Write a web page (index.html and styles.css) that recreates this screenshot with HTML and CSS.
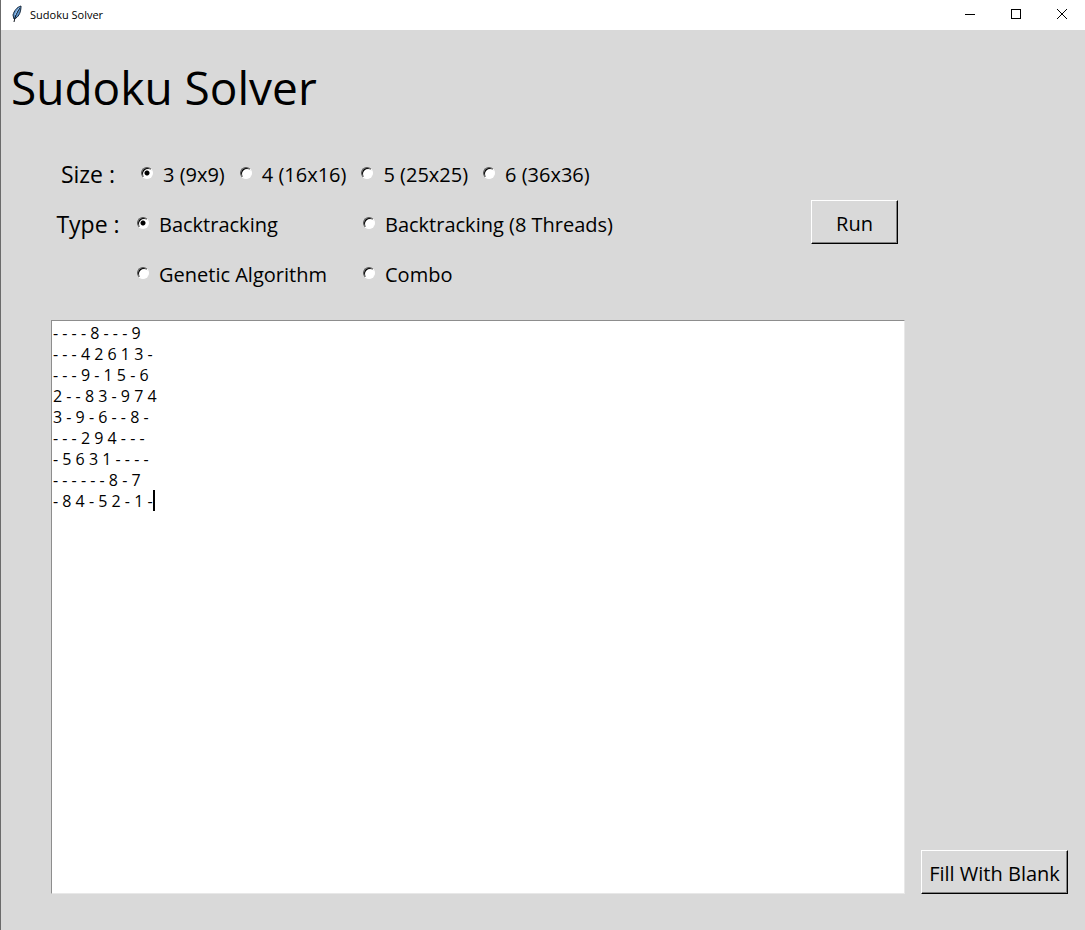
FILE: index.html
```html
<!DOCTYPE html>
<html lang="en">
<head>
<meta charset="utf-8">
<title>Sudoku Solver</title>
<link rel="stylesheet" href="styles.css">
</head>
<body>
<div class="window">
  <header class="titlebar">
    <svg class="feather" viewBox="0 0 12 18" aria-hidden="true">
      <path d="M10 1C6 2 3 6 2 10l1 4 2-1c3-2 5-6 5-12z" fill="#5b93cc" stroke="#17283a"/>
      <path d="M9 3C6 7 4 11 3 17" fill="none" stroke="#10151c"/>
      <path d="M8 3C6 5 5 8 4 10" fill="none" stroke="#a9cdf0"/>
    </svg>
    <span class="caption">Sudoku Solver</span>
    <button class="control" type="button" aria-label="Minimize"><svg viewBox="0 0 12 12" shape-rendering="crispEdges"><path d="M1 6.5h10"/></svg></button>
    <button class="control" type="button" aria-label="Maximize"><svg viewBox="0 0 12 12" shape-rendering="crispEdges"><path d="M1.5 1.5h9v9h-9z"/></svg></button>
    <button class="control" type="button" aria-label="Close"><svg viewBox="0 0 12 12"><path d="M1 1l10 10M11 1L1 11"/></svg></button>
  </header>
  <main class="content">
    <h1 class="heading">Sudoku Solver</h1>
    <form class="solver">
      <div class="settings">
        <div class="options">
          <span class="name" id="size-name">Size :</span>
          <div class="sizes" role="radiogroup" aria-labelledby="size-name">
            <label class="choice"><input type="radio" name="size" checked>3 (9x9)</label>
            <label class="choice"><input type="radio" name="size">4 (16x16)</label>
            <label class="choice"><input type="radio" name="size">5 (25x25)</label>
            <label class="choice"><input type="radio" name="size">6 (36x36)</label>
          </div>
          <span class="name" id="type-name">Type :</span>
          <div class="types" role="radiogroup" aria-labelledby="type-name">
            <label class="choice"><input type="radio" name="type" checked>Backtracking</label>
            <label class="choice"><input type="radio" name="type">Backtracking (8 Threads)</label>
            <label class="choice"><input type="radio" name="type">Genetic Algorithm</label>
            <label class="choice"><input type="radio" name="type">Combo</label>
          </div>
        </div>
        <button class="push run" type="button">Run</button>
      </div>
      <div class="editor">
        <textarea class="board" aria-label="Puzzle" spellcheck="false">- - - - 8 - - - 9
- - - 4 2 6 1 3 -
- - - 9 - 1 5 - 6
2 - - 8 3 - 9 7 4
3 - 9 - 6 - - 8 -
- - - 2 9 4 - - -
- 5 6 3 1 - - - -
- - - - - - 8 - 7
- 8 4 - 5 2 - 1 -</textarea>
        <span class="caret"></span>
      </div>
      <button class="push fill" type="button">Fill With Blank</button>
    </form>
  </main>
</div>
</body>
</html>
```
FILE: styles.css
```css
* { box-sizing: border-box; }

body {
  margin: 0;
  background: #d9d9d9;
  color: #000;
  font-family: "Open Sans", "Noto Sans", sans-serif;
  font-size: 20px;
}

button, input, textarea { font: inherit; color: inherit; }

.window {
  display: flex;
  flex-direction: column;
  min-height: 100vh;
  border-left: 1px solid #6b6b6b;
}

.titlebar {
  display: flex;
  align-items: center;
  height: 30px;
  padding: 0 0 2px 10px;
  background: #fff;
}

.feather { width: 12px; height: 18px; }

.caption {
  flex: 1;
  margin-left: 7px;
  font-size: 11px;
}

.control {
  display: flex;
  align-items: center;
  justify-content: center;
  width: 46px;
  height: 28px;
  padding: 0;
  border: 0;
  background: none;
}

.control svg {
  width: 12px;
  height: 12px;
  fill: none;
  stroke: #000;
}

.content {
  display: flex;
  flex: 1;
  flex-direction: column;
  padding: 19px 17px 36px 10px;
}

.heading {
  margin: 0;
  font-size: 46px;
  font-weight: 400;
  line-height: 76px;
}

.solver {
  display: grid;
  flex: 1;
  grid-template-columns: 1fr auto;
  grid-template-rows: auto 1fr;
  column-gap: 16px;
  padding: 25px 0 0 40px;
}

.settings {
  display: flex;
  align-items: center;
  justify-content: space-between;
  padding: 0 7px 20px 0;
}

.options {
  display: grid;
  grid-template-columns: 74px auto;
  column-gap: 12px;
  line-height: 50px;
}

.name {
  font-size: 23px;
  line-height: 48px;
  text-align: center;
}

.sizes { display: flex; gap: 15px; padding-left: 4px; }

.types { display: grid; grid-template-columns: 226px auto; }

.choice {
  display: flex;
  align-items: center;
  gap: 10px;
  white-space: nowrap;
}

.choice input {
  appearance: none;
  width: 12px;
  height: 12px;
  margin: 0 0 4px;
  border: 1px solid;
  border-color: #555 #fff #fff #555;
  border-radius: 50%;
  background: #fff;
  box-shadow: inset 1px 1px #000;
}

.choice input:checked {
  background: radial-gradient(circle, #000 2px, #fff 3px);
}

.push {
  height: 44px;
  padding: 2px 0 0;
  border: 1px solid;
  border-color: #fff #000 #000 #fff;
  border-radius: 0;
  background: #d9d9d9;
  box-shadow: inset -1px -1px #828282;
}

.run {
  width: 87px;
  margin-bottom: 6px;
}

.fill {
  align-self: end;
  width: 147px;
}

.editor {
  position: relative;
  display: flex;
  grid-column: 1;
}

.board {
  flex: 1;
  padding: 2px 1px;
  border: 1px solid;
  border-color: #8d8d8d #e8e8e8 #e8e8e8 #8d8d8d;
  border-radius: 0;
  outline: 0;
  resize: none;
  background: #fff;
  font-size: 16px;
  line-height: 21px;
}

.caret {
  position: absolute;
  top: 170px;
  left: 102px;
  width: 2px;
  height: 21px;
  background: #000;
}
```
